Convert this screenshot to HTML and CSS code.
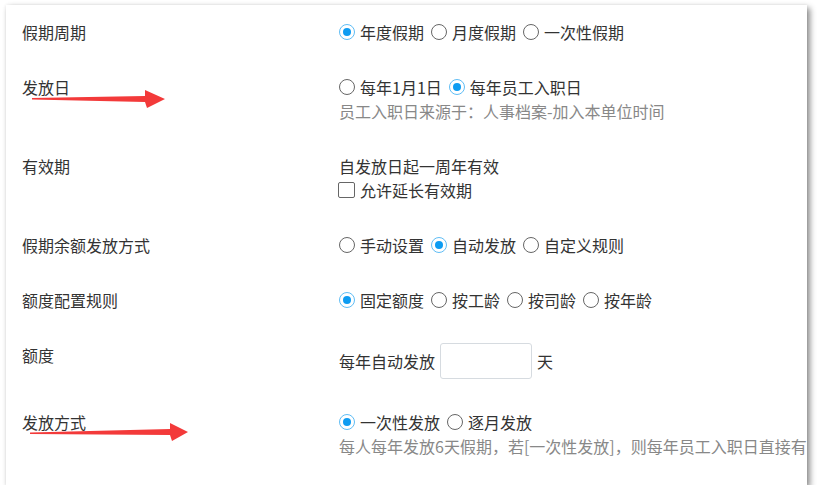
FILE: index.html
```html
<!DOCTYPE html>
<html lang="zh-CN">

<head>
    <meta charset="UTF-8">
    <title>假期规则设置</title>
    <link rel="stylesheet" href="styles.css">
</head>

<body>
    <!--设置卡片-->
    <div class="card">
        <!--假期周期-->
        <div class="row">
            <div class="label">假期周期</div>
            <div class="ctrl">
                <div class="group">
                    <span class="opt"><i class="radio on"></i>年度假期</span>
                    <span class="opt"><i class="radio"></i>月度假期</span>
                    <span class="opt"><i class="radio"></i>一次性假期</span>
                </div>
            </div>
        </div>
        <!--发放日-->
        <div class="row">
            <div class="label">发放日</div>
            <div class="ctrl">
                <div class="group">
                    <span class="opt"><i class="radio"></i>每年1月1日</span>
                    <span class="opt"><i class="radio on"></i>每年员工入职日</span>
                </div>
                <div class="hint">员工入职日来源于：人事档案-加入本单位时间</div>
            </div>
        </div>
        <!--有效期-->
        <div class="row">
            <div class="label">有效期</div>
            <div class="ctrl">
                <div>自发放日起一周年有效</div>
                <div class="group">
                    <span class="opt"><i class="check"></i>允许延长有效期</span>
                </div>
            </div>
        </div>
        <!--余额发放方式-->
        <div class="row">
            <div class="label">假期余额发放方式</div>
            <div class="ctrl">
                <div class="group">
                    <span class="opt"><i class="radio"></i>手动设置</span>
                    <span class="opt"><i class="radio on"></i>自动发放</span>
                    <span class="opt"><i class="radio"></i>自定义规则</span>
                </div>
            </div>
        </div>
        <!--额度配置规则-->
        <div class="row">
            <div class="label">额度配置规则</div>
            <div class="ctrl">
                <div class="group">
                    <span class="opt"><i class="radio on"></i>固定额度</span>
                    <span class="opt"><i class="radio"></i>按工龄</span>
                    <span class="opt"><i class="radio"></i>按司龄</span>
                    <span class="opt"><i class="radio"></i>按年龄</span>
                </div>
            </div>
        </div>
        <!--额度-->
        <div class="row">
            <div class="label">额度</div>
            <div class="ctrl">
                <div class="amount">
                    <span>每年自动发放</span>
                    <input type="text" class="num">
                    <span>天</span>
                </div>
            </div>
        </div>
        <!--发放方式-->
        <div class="row">
            <div class="label">发放方式</div>
            <div class="ctrl">
                <div class="group">
                    <span class="opt"><i class="radio on"></i>一次性发放</span>
                    <span class="opt"><i class="radio"></i>逐月发放</span>
                </div>
                <div class="hint">每人每年发放6天假期，若[一次性发放]，则每年员工入职日直接有</div>
            </div>
        </div>

        <!--标注箭头-->
        <svg class="marks" width="801" height="480" viewBox="0 0 801 480">
            <polygon points="26,93 139,91 139,85 159,94 141,103 139,97 26,94.5" fill="#f33a3a"/>
            <polygon points="24,427.5 164,424 164,418 182,427 166,436 164,430 24,429" fill="#f33a3a"/>
        </svg>
    </div>
</body>

</html>
```

FILE: styles.css
```css
html,
body {
    margin: 0;
    padding: 0;
    background: #fff;
}

body {
    font: 16px/24px "Noto Sans CJK SC", "Liberation Sans", sans-serif;
    color: #333;
}

/*卡片*/
.card {
    position: relative;
    /*箭头定位用*/
    width: 801px;
    height: 480px;
    margin: 5px 0 0 6px;
    padding: 15px 0 0 16px;
    box-sizing: border-box;
    display: flex;
    flex-direction: column;
    gap: 31px;
    background: #fff;
    box-shadow: 3px 3px 6px rgba(0, 0, 0, .45), 0 0 3px rgba(0, 0, 0, .08);
}

/*一行*/
.row {
    display: grid;
    grid-template-columns: 317px 1fr;
}

.ctrl {
    white-space: nowrap;
}

/*选项组*/
.group {
    display: flex;
    gap: 7px;
}

.opt {
    display: inline-flex;
    align-items: center;
    gap: 5px;
}

/*单选*/
.radio {
    position: relative;
    width: 16px;
    height: 16px;
    border: 1px solid #666;
    border-radius: 50%;
    box-sizing: border-box;
}

.radio.on {
    border-color: #5fbdf5;
}

.radio.on::after {
    content: "";
    position: absolute;
    left: 3px;
    top: 3px;
    width: 8px;
    height: 8px;
    border-radius: 50%;
    background: #0d9cf2;
}

/*复选*/
.check {
    width: 17px;
    height: 16px;
    margin-left: -1px;
    border: 1px solid #666;
    border-radius: 2px;
    box-sizing: border-box;
}

/*说明文字*/
.hint {
    color: #888;
}

/*额度输入*/
.amount {
    display: flex;
    align-items: center;
    gap: 5px;
}

.num {
    width: 92px;
    height: 36px;
    margin: 0;
    border: 1px solid #d6dbe0;
    border-radius: 3px;
    box-sizing: border-box;
    outline: none;
}

/*箭头*/
.marks {
    position: absolute;
    left: 0;
    top: 0;
    pointer-events: none;
}
```
